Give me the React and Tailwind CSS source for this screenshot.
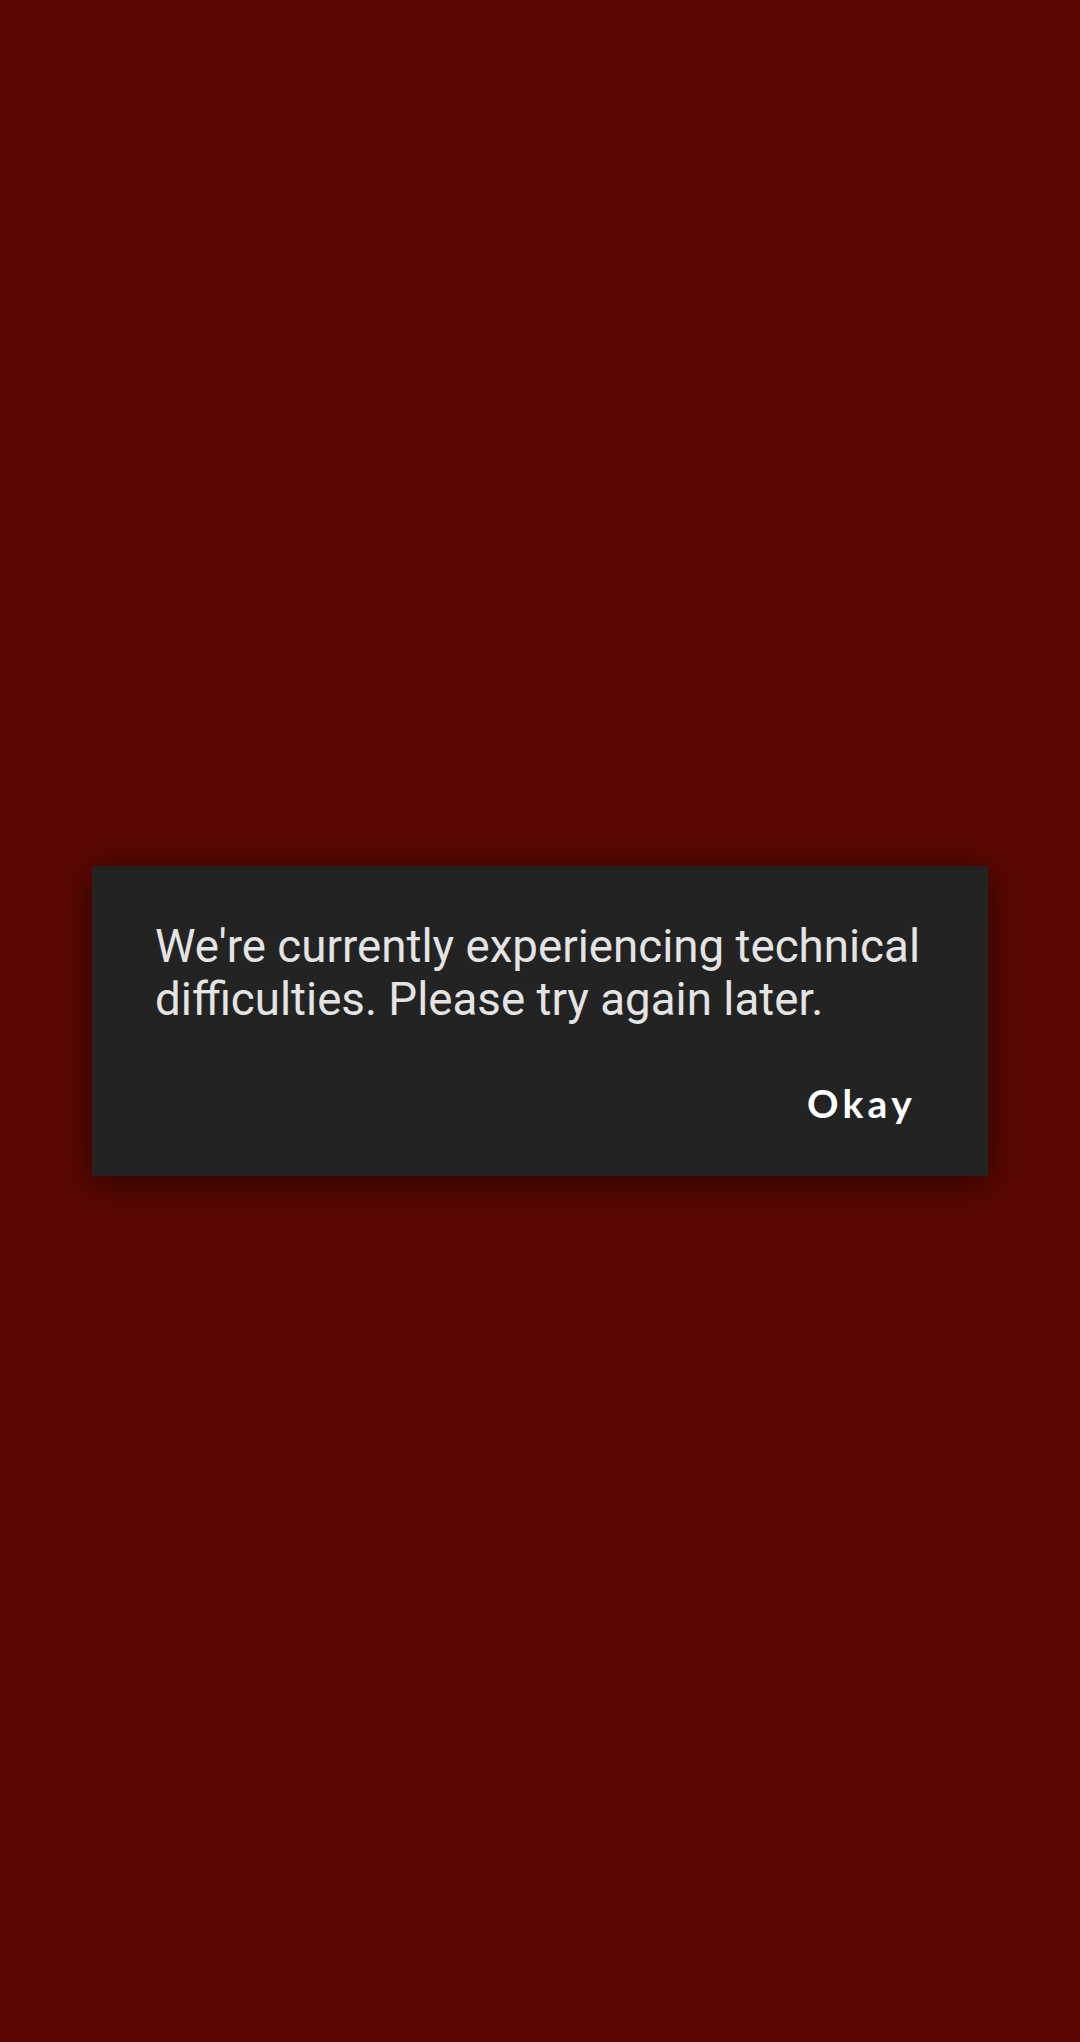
import React from "react";

const App = () => {
  return (
    <div className="w-full h-[2042px] bg-[#5b0700] flex items-center justify-center">
      <div className="w-[896px] bg-[#232323] shadow-[0_6px_36px_rgba(0,0,0,0.55)] pt-[54px] pb-[53px] pl-[63px] pr-[56px]">
        <p className="text-[45.7px] leading-[53px] text-[#e4e4e4] font-['Roboto',sans-serif]">
          We're currently experiencing technical difficulties. Please try again later.
        </p>
        <div className="flex justify-end mt-[58px]">
          <button className="mr-[16px] text-[39px] leading-[39px] font-bold tracking-[0.11em] text-white font-['Lato',sans-serif]">
            Okay
          </button>
        </div>
      </div>
    </div>
  );
};

export default App;
